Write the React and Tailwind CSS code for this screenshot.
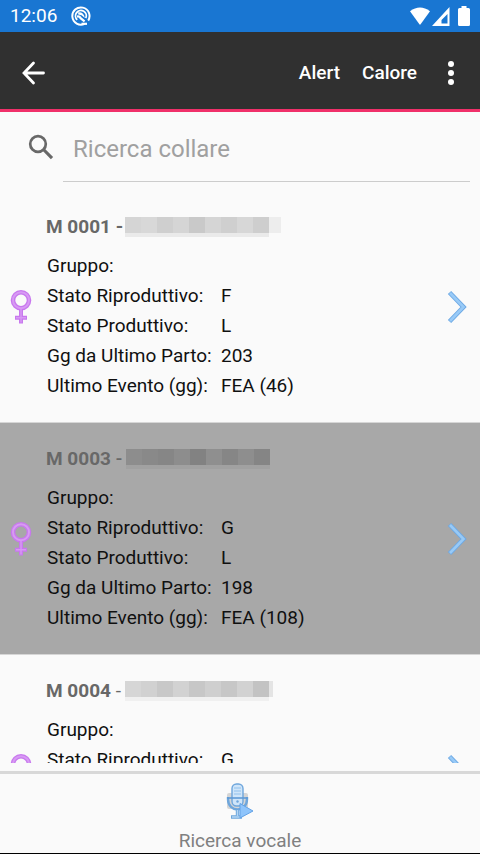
const COWS = [
  {
    id: "M 0001",
    gap: "gap-0.5",
    dash: "font-bold",
    selected: false,
    rows: [["Gruppo:", ""], ["Stato Riproduttivo:", "F"], ["Stato Produttivo:", "L"], ["Gg da Ultimo Parto:", "203"], ["Ultimo Evento (gg):", "FEA (46)"]],
    blocks: ["bg-[#d5d5d5]", "bg-[#d8d8d8]", "bg-[#cfcfcf]", "bg-[#d5d5d5]", "bg-[#c9c9c9]", "bg-[#d5d5d5]", "bg-[#cfcfcf]", "bg-[#d7d7d7]", "bg-[#cecece]"],
    fringe: "bg-[#eaeaea]",
    tail: "w-3 bg-[#ededed]",
  },
  {
    id: "M 0003",
    gap: "gap-1",
    dash: "font-medium",
    selected: true,
    rows: [["Gruppo:", ""], ["Stato Riproduttivo:", "G"], ["Stato Produttivo:", "L"], ["Gg da Ultimo Parto:", "198"], ["Ultimo Evento (gg):", "FEA (108)"]],
    blocks: ["bg-[#8d8d8d]", "bg-[#898989]", "bg-[#868686]", "bg-[#8d8d8d]", "bg-[#828282]", "bg-[#8f8f8f]", "bg-[#868686]", "bg-[#8e8e8e]", "bg-[#858585]"],
    fringe: "bg-[#a1a1a1]",
    tail: "w-0",
  },
  {
    id: "M 0004",
    gap: "gap-1",
    dash: "font-normal",
    selected: false,
    rows: [["Gruppo:", ""], ["Stato Riproduttivo:", "G"]],
    blocks: ["bg-[#d6d6d6]", "bg-[#d1d1d1]", "bg-[#c8c8c8]", "bg-[#d2d2d2]", "bg-[#c7c7c7]", "bg-[#cfcfcf]", "bg-[#c7c7c7]", "bg-[#d2d2d2]", "bg-[#c3c3c3]"],
    fringe: "bg-[#f0f0f0]",
    tail: "w-1 bg-[#e4e4e4]",
  },
];

function StatusBar() {
  return (
    <div className="flex h-8 shrink-0 items-center bg-[#1976d2] pr-2.5 pl-2.5 text-white">
      <span className="text-[19px] leading-8">12:06</span>
      <svg viewBox="0 0 20 20" className="ml-3.5 size-5" fill="none" stroke="currentColor">
        <path d="M13.6 17.8A8.6 8.6 0 1 1 17.2 14.6" strokeWidth="2" />
        <path d="M6.2 13.8A5.4 5.4 0 1 1 14.8 12.2" strokeWidth="1.8" />
        <path d="M7.2 6.2Q12.8 5.6 13.8 12Q10.5 8.6 7.2 8.6Z" fill="currentColor" stroke="none" />
        <path d="M6 10.6Q8.6 10 9.6 12.2L13.6 15.4" strokeWidth="2.2" />
        <path d="M10.5 17.8H16" strokeWidth="2.2" />
      </svg>
      <svg viewBox="0 0 20 18" className="ml-auto h-[18px] w-5" fill="currentColor">
        <path d="M0 4.2Q10-3.3 20 4.2L10.6 17.3Q10 18 9.4 17.3Z" />
      </svg>
      <svg viewBox="0 0 18 19" className="ml-0.5 h-[19px] w-[18px]" fill="currentColor">
        <path fillRule="evenodd" d="M17.5 0V19H0ZM15.5 7L9.5 13V16.5H15.5Z" />
      </svg>
      <svg viewBox="0 0 12 20" className="ml-2 h-5 w-3" fill="currentColor">
        <path d="M3.5 0H8.5V2H10.5Q12 2 12 3.5V18.5Q12 20 10.5 20H1.5Q0 20 0 18.5V3.5Q0 2 1.5 2H3.5Z" />
      </svg>
    </div>
  );
}

function AppBar() {
  return (
    <header className="flex h-20 shrink-0 items-center border-b-3 border-[#f0306a] bg-[#303030] pt-1 pl-[22px] text-white">
      <button type="button" aria-label="Indietro" className="mr-auto">
        <svg viewBox="0 0 24 24" className="size-6" fill="none" stroke="currentColor" strokeWidth="2.8" strokeLinecap="round">
          <path d="M21.5 12H2.5M11.5 2L2 12L11.5 22" />
        </svg>
      </button>
      <button type="button" className="mr-[22px] pt-0.5 text-[19px] font-medium">Alert</button>
      <button type="button" className="pt-0.5 text-[19px] font-medium">Calore</button>
      <button type="button" aria-label="Altre opzioni" className="mr-[25px] ml-[30px]">
        <svg viewBox="0 0 8 24" className="h-6 w-2" fill="currentColor">
          <circle cx="4" cy="3" r="3" />
          <circle cx="4" cy="12" r="3" />
          <circle cx="4" cy="21" r="3" />
        </svg>
      </button>
    </header>
  );
}

function Search() {
  return (
    <div className="flex h-[70px] shrink-0 items-stretch pr-2.5 pl-7">
      <label htmlFor="collare" aria-label="Ricerca collare" className="mr-[9px] flex w-[26px] items-center">
        <svg viewBox="0 0 26 26" className="size-[26px]" fill="none" stroke="#686868">
          <circle cx="10" cy="10" r="7.8" strokeWidth="2.7" />
          <path d="M15.5 15.5L24 24.2" strokeWidth="3.2" />
        </svg>
      </label>
      <input
        id="collare"
        type="text"
        placeholder="Ricerca collare"
        className="min-w-0 flex-1 border-b border-[#cccccc] bg-transparent pt-1 pl-2.5 text-2xl text-black outline-none placeholder:text-[#a0a0a0]"
      />
    </div>
  );
}

function Female() {
  return (
    <svg viewBox="0 0 22 36" className="h-9 w-[22px]" fill="none">
      <g stroke="#c878ee" strokeWidth="4.6">
        <circle cx="11" cy="11.2" r="8" />
        <path d="M11 19.5V34.5M5 28.8H17" strokeWidth="4" />
      </g>
      <g stroke="#d89af4" strokeWidth="2">
        <circle cx="11" cy="11.2" r="8" />
        <path d="M11 20V33.5M6 28.8H16" strokeWidth="1.4" />
      </g>
    </svg>
  );
}

function Chevron() {
  return (
    <svg viewBox="0 0 20 34" className="h-[34px] w-5" fill="none">
      <path d="M2.5 2.5L16.5 17L2.5 31.5" stroke="#6ea9e4" strokeWidth="4.6" />
      <path d="M3 3L16.5 17L3 31" stroke="#98caf7" strokeWidth="2.6" />
    </svg>
  );
}

function Redacted({ blocks, fringe, tail }) {
  return (
    <span className="flex h-5" role="img" aria-label="Nome oscurato">
      {blocks.map((color, i) => (
        <span key={i} className={`h-5 w-4 ${fringe}`}>
          <span className={`block h-4 w-4 ${color}`} />
        </span>
      ))}
      <span className={`h-4 ${tail}`} />
    </span>
  );
}

function Cow({ cow }) {
  return (
    <li className={`flex h-[232px] shrink-0 items-center border-b border-[#d6d6d6] ${cow.selected ? "bg-[#a8a8a8]" : ""}`}>
      <div className="flex w-[46px] shrink-0 pl-2.5">
        <Female />
      </div>
      <div className="min-w-0 flex-1 self-stretch pt-[21px]">
        <h2 className={`mb-[9px] flex h-[30px] items-center text-[19px] font-bold text-[#686868] ${cow.gap}`}>
          <span>
            {cow.id} <span className={cow.dash}>-</span>
          </span>
          <Redacted blocks={cow.blocks} fringe={cow.fringe} tail={cow.tail} />
        </h2>
        <dl className="grid grid-cols-[174px_1fr] pl-px text-[19px] leading-[30px] text-[#101010]">
          {cow.rows.map(([label, value]) => (
            <div key={label} className="contents">
              <dt className="whitespace-nowrap">{label}</dt>
              <dd>{value}</dd>
            </div>
          ))}
        </dl>
      </div>
      <button type="button" aria-label={`Apri ${cow.id}`} className="mr-[13px] shrink-0">
        <Chevron />
      </button>
    </li>
  );
}

function Microphone() {
  return (
    <svg viewBox="0 0 28 36" className="h-9 w-7" fill="none">
      <rect x="1" y="10" width="21" height="16" rx="2" fill="#d5d5d5" />
      <path d="M2 14V16C2 30 21 30 21 16V14" stroke="#6ea6dc" strokeWidth="2.4" />
      <path d="M11.5 27V33M5 34H16" stroke="#6ea6dc" strokeWidth="3.4" />
      <path d="M11.5 27V33M6 34H15" stroke="#b4d6f4" strokeWidth="1.4" />
      <rect x="6" y="1" width="11" height="22" rx="4.5" fill="#cfe5f9" stroke="#6ea6dc" strokeWidth="1.4" />
      <path d="M8 5H15M8 8H15M8 11H15" stroke="#a6cdf1" strokeWidth="1.4" />
      <path d="M1 15H22" stroke="#5f9ad6" strokeWidth="1.6" />
      <circle cx="11.5" cy="18.5" r="1.2" fill="#6ea6dc" />
      <path d="M14 20.5V35L27 28Z" fill="#8ec4fb" stroke="#62a2e6" />
    </svg>
  );
}

export default function App() {
  return (
    <div className="flex h-screen flex-col overflow-hidden bg-[#fafafa] font-['Roboto',sans-serif]">
      <StatusBar />
      <AppBar />
      <Search />
      <main className="mt-[9px] mb-2 min-h-0 flex-1 overflow-hidden">
        <ul className="flex flex-col">
          {COWS.map((cow) => (
            <Cow key={cow.id} cow={cow} />
          ))}
        </ul>
      </main>
      <footer className="shrink-0 border-t-3 border-b border-t-[#d8d8d8] border-b-black">
        <button type="button" className="flex h-[79px] w-full flex-col items-center justify-end gap-2.5 text-[19px] leading-6 text-[#808080]">
          <Microphone />
          <span>Ricerca vocale</span>
        </button>
      </footer>
    </div>
  );
}
